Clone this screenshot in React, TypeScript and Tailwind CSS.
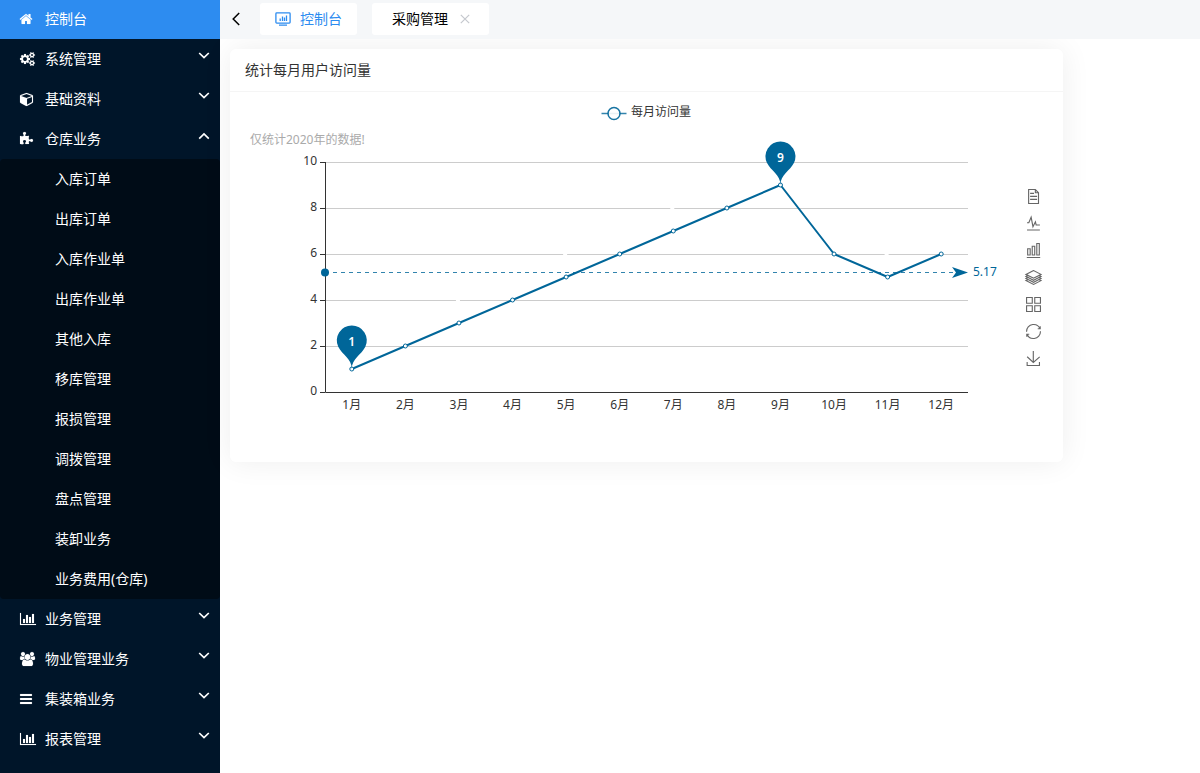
import { useState } from "react";

type IconShape = { viewBox: string; size: string; d: string };

const icons: Record<string, IconShape> = {
  home: {
    viewBox: "64 0 1664 1792",
    size: "w-[13px]",
    d: "M1408 992v480q0 26-19 45t-45 19h-384v-384h-256v384h-384q-26 0-45-19t-19-45v-480q0-1 .5-3t.5-3l575-474 575 474q1 2 1 6zm223-69l-62 74q-8 9-21 11h-3q-13 0-21-7l-692-577-692 577q-12 8-24 7-13-2-21-11l-62-74q-8-10-7-23.5t11-21.5l719-599q32-26 76-26t76 26l244 204v-195q0-14 9-23t23-9h192q14 0 23 9t9 23v408l219 182q10 8 11 21.5t-7 23.5z",
  },
  cogs: {
    viewBox: "0 0 1920 1792",
    size: "w-[15px]",
    d: "M896 896q0-106-75-181t-181-75-181 75-75 181 75 181 181 75 181-75 75-181zm768 512q0-52-38-90t-90-38-90 38-38 90q0 53 37.5 90.5t90.5 37.5 90.5-37.5 37.5-90.5zm0-1024q0-52-38-90t-90-38-90 38-38 90q0 53 37.5 90.5t90.5 37.5 90.5-37.5 37.5-90.5zm-384 421v185q0 10-7 19.5t-16 10.5l-155 24q-11 35-32 76 34 48 90 115 7 11 7 20 0 12-7 19-23 30-82.5 89.5t-78.5 59.5q-11 0-21-7l-115-90q-37 19-77 31-11 108-23 155-7 24-30 24h-186q-11 0-20-7.5t-10-17.5l-23-153q-34-10-75-31l-118 89q-7 7-20 7-11 0-21-8-144-133-144-160 0-9 7-19 10-14 41-53t47-61q-23-44-35-82l-152-24q-10-1-17-9.5t-7-19.5v-185q0-10 7-19.5t16-10.5l155-24q11-35 32-76-34-48-90-115-7-11-7-20 0-12 7-20 22-30 82-89t79-59q11 0 21 7l115 90q34-18 77-32 11-108 23-154 7-24 30-24h186q11 0 20 7.5t10 17.5l23 153q34 10 75 31l118-89q8-7 20-7 11 0 21 8 144 133 144 160 0 8-7 19-12 16-42 54t-45 60q23 48 34 82l152 23q10 2 17 10.5t7 19.5zm640 533v140q0 16-149 31-12 27-30 52 51 113 51 138 0 4-4 7-122 71-124 71-8 0-46-47t-52-68q-20 2-30 2t-30-2q-14 21-52 68t-46 47q-2 0-124-71-4-3-4-7 0-25 51-138-18-25-30-52-149-15-149-31v-140q0-16 149-31 13-29 30-52-51-113-51-138 0-4 4-7 4-2 35-20t59-34 30-16q8 0 46 46.5t52 67.5q20-2 30-2t30 2q51-71 92-112l6-2q4 0 124 70 4 3 4 7 0 25-51 138 17 23 30 52 149 15 149 31zm0-1024v140q0 16-149 31-12 27-30 52 51 113 51 138 0 4-4 7-122 71-124 71-8 0-46-47t-52-68q-20 2-30 2t-30-2q-14 21-52 68t-46 47q-2 0-124-71-4-3-4-7 0-25 51-138-18-25-30-52-149-15-149-31v-140q0-16 149-31 13-29 30-52-51-113-51-138 0-4 4-7 4-2 35-20t59-34 30-16q8 0 46 46.5t52 67.5q20-2 30-2t30 2q51-71 92-112l6-2q4 0 124 70 4 3 4 7 0 25-51 138 17 23 30 52 149 15 149 31z",
  },
  cube: {
    viewBox: "0 0 1664 1792",
    size: "w-[13px]",
    d: "M896 1629l640-349v-636l-640 233v752zm-64-865l698-254-698-254-698 254zm832-252v768q0 35-18 65t-49 47l-704 384q-28 16-61 16t-61-16l-704-384q-31-17-49-47t-18-65v-768q0-40 23-73t61-47l704-256q22-8 44-8t44 8l704 256q38 14 61 47t23 73z",
  },
  puzzle: {
    viewBox: "91 0 1664 1792",
    size: "w-[13px]",
    d: "M1755 1083q0 81-44.5 135t-123.5 54q-41 0-77.5-17.5t-59-38-56.5-38-71-17.5q-110 0-110 124 0 39 16 115t15 115v5q-22 0-33 1-34 3-97.5 11.5t-115.5 13.5-98 5q-61 0-103-26.5t-42-83.5q0-37 17.5-71t38-56.5 38-59 17.5-77.5q0-79-54-123.5t-135-44.5q-84 0-143 45.5t-59 127.5q0 43 15 83t33.5 64.5 33.5 53 15 50.5q0 45-46 89-37 35-117 35-95 0-245-24-9-2-27.5-4t-27.5-4l-13-2q-1 0-3-1-2 0-2-1v-1024q2 1 17.5 3.5t34 5 21.5 3.5q150 24 245 24 80 0 117-35 46-44 46-89 0-22-15-50.5t-33.5-53-33.5-64.5-15-83q0-82 59-127.5t144-45.5q80 0 134 44.5t54 123.5q0 41-17.5 77.5t-38 59-38 56.5-17.5 71q0 57 42 83.5t103 26.5q64 0 180-15t163-17v2q-1 2-3.5 17.5t-5 34-3.5 21.5q-24 150-24 245 0 80 35 117 44 46 89 46 22 0 50.5-15t53-33.5 64.5-33.5 83-15q82 0 127.5 59t45.5 143z",
  },
  chart: {
    viewBox: "0 0 2048 1792",
    size: "w-4",
    d: "M640 896v512h-256v-512h256zm384-512v1024h-256v-1024h256zm1024 1152v128h-2048v-1536h128v1408h1920zm-640-896v768h-256v-768h256zm384-384v1152h-256v-1152h256z",
  },
  users: {
    viewBox: "0 0 1920 1792",
    size: "w-[15px]",
    d: "M593 896q-162 5-265 128h-134q-82 0-138-40.5t-56-118.5q0-353 124-353 6 0 43.5 21t97.5 42.5 119 21.5q67 0 133-23-5 37-5 66 0 159 93 256zm1071 637q0 120-73 189.5t-194 69.5h-874q-121 0-194-69.5t-73-189.5q0-53 3.5-103.5t14-109 26.5-108.5 43-97.5 62-81 85.5-53.5 111.5-20q10 0 43 21.5t73 48 107 48 135 21.5 135-21.5 107-48 73-48 43-21.5q61 0 111.5 20t85.5 53.5 62 81 43 97.5 26.5 108.5 14 109 3.5 103.5zm-1024-1277q0 106-75 181t-181 75-181-75-75-181 75-181 181-75 181 75 75 181zm704 384q0 159-112.5 271.5t-271.5 112.5-271.5-112.5-112.5-271.5 112.5-271.5 271.5-112.5 271.5 112.5 112.5 271.5zm576 225q0 78-56 118.5t-138 40.5h-134q-103-123-265-128 93-97 93-256 0-29-5-66 66 23 133 23 59 0 119-21.5t97.5-42.5 43.5-21q124 0 124 353zm-128-609q0 106-75 181t-181 75-181-75-75-181 75-181 181-75 181 75 75 181z",
  },
  bars: {
    viewBox: "128 0 1536 1792",
    size: "w-3",
    d: "M1664 1344v128q0 26-19 45t-45 19h-1408q-26 0-45-19t-19-45v-128q0-26 19-45t45-19h1408q26 0 45 19t19 45zM1664 832v128q0 26-19 45t-45 19h-1408q-26 0-45-19t-19-45v-128q0-26 19-45t45-19h1408q26 0 45 19t19 45zM1664 320v128q0 26-19 45t-45 19h-1408q-26 0-45-19t-19-45v-128q0-26 19-45t45-19h1408q26 0 45 19t19 45z",
  },
};

type MenuEntry = { icon: string; label: string; children?: string[] };

const menu: MenuEntry[] = [
  { icon: "cogs", label: "系统管理" },
  { icon: "cube", label: "基础资料" },
  {
    icon: "puzzle",
    label: "仓库业务",
    children: [
      "入库订单",
      "出库订单",
      "入库作业单",
      "出库作业单",
      "其他入库",
      "移库管理",
      "报损管理",
      "调拨管理",
      "盘点管理",
      "装卸业务",
      "业务费用(仓库)",
    ],
  },
  { icon: "chart", label: "业务管理" },
  { icon: "users", label: "物业管理业务" },
  { icon: "bars", label: "集装箱业务" },
  { icon: "chart", label: "报表管理" },
];

function MenuIcon({ name }: { name: string }) {
  const icon = icons[name];
  return (
    <span className="flex w-[25px] shrink-0">
      <svg
        viewBox={icon.viewBox}
        className={`h-3.5 overflow-visible fill-current stroke-current stroke-[16] ${icon.size}`}
        aria-hidden="true"
      >
        <path d={icon.d} />
      </svg>
    </span>
  );
}

function Sidebar() {
  const [open, setOpen] = useState("仓库业务");
  return (
    <nav className="w-[220px] shrink-0 bg-[#001529] text-sm text-white">
      <a href="#console" className="flex h-[39px] items-center bg-[#2d8cf0] pb-px pl-5">
        <MenuIcon name="home" />
        控制台
      </a>
      <ul>
        {menu.map((entry) => {
          const expanded = open === entry.label;
          return (
            <li key={entry.label}>
              <button
                type="button"
                aria-expanded={expanded}
                onClick={() => setOpen(expanded ? "" : entry.label)}
                className="flex h-10 w-full cursor-pointer items-center pl-5 pr-[10px] text-left"
              >
                <MenuIcon name={entry.icon} />
                <span className="grow">{entry.label}</span>
                <svg viewBox="0 0 12 12" className="mb-2 h-3 w-3 fill-none stroke-white stroke-[1.7]" aria-hidden="true">
                  <path d={expanded ? "M1.2 9.600L6 5L10.800 9.600" : "M1.2 4L6 8.600L10.800 4"} />
                </svg>
              </button>
              {expanded && entry.children && (
                <ul className="rounded-sm bg-[#000c17]">
                  {entry.children.map((child) => (
                    <li key={child}>
                      <a href="#page" className="flex h-10 items-center pl-[55px]">
                        {child}
                      </a>
                    </li>
                  ))}
                </ul>
              )}
            </li>
          );
        })}
      </ul>
    </nav>
  );
}

function TabBar() {
  return (
    <header className="relative z-10 flex h-[39px] bg-[#f5f7f9] pb-1 pt-[3px] text-sm text-black">
      <button type="button" aria-label="向左滚动" className="flex w-10 cursor-pointer items-center pl-3">
        <svg viewBox="0 0 8 14" className="h-3.5 w-2 fill-none stroke-black stroke-[1.5]" aria-hidden="true">
          <path d="M7.200 1L1.200 7L7.200 13" />
        </svg>
      </button>
      <div className="flex gap-[15px]">
        <button type="button" className="flex cursor-pointer items-center gap-[9px] rounded-[3px] bg-white px-[15px] text-[#2d8cf0]">
          <svg viewBox="0 0 16 14" className="h-3.5 w-4 fill-none stroke-current stroke-[1.300]" aria-hidden="true">
            <rect x="0.900" y="0.900" width="14.200" height="10.200" rx="0.800" />
            <path d="M5.200 9V6.500M7.500 9V4.500M9.500 9V5.500M11.500 9V3.500M4 13.200H12" />
          </svg>
          控制台
        </button>
        <div className="flex items-center gap-3 rounded-[3px] bg-white pl-5 pr-[19px]">
          <button type="button" className="cursor-pointer">
            采购管理
          </button>
          <button type="button" aria-label="关闭采购管理" className="cursor-pointer">
            <svg viewBox="0 0 10 10" className="h-2.5 w-2.5 fill-none stroke-[#c5c8ce] stroke-[1.200]" aria-hidden="true">
              <path d="M0.800 0.800L9.200 9.200M9.200 0.800L0.800 9.200" />
            </svg>
          </button>
        </div>
      </div>
    </header>
  );
}

const visits = [1, 2, 3, 4, 5, 6, 7, 8, 9, 6, 5, 6];
const plot = { left: 80, right: 723, bottom: 290, unit: 23 };
const pointX = (i: number) => plot.left + ((i + 0.5) * (plot.right - plot.left)) / 12;
const pointY = (v: number) => plot.bottom - v * plot.unit;

function Pin({ index }: { index: number }) {
  return (
    <g transform={`translate(${pointX(index)} ${pointY(visits[index])})`}>
      <path
        fill="#006699"
        d="M-13.55 -22.14A15 15 0 1 1 13.55 -22.14C9.69 -14.01 0 -10.5 0 0C0 -10.5 -9.69 -14.01 -13.55 -22.14Z"
      />
      <text y="-23" textAnchor="middle" fill="#fff" className="font-semibold">
        {visits[index]}
      </text>
    </g>
  );
}

function VisitChart() {
  const average = visits.reduce((sum, v) => sum + v, 0) / visits.length;
  const averageY = Math.round(pointY(average)) - 0.5;
  return (
    <svg viewBox="0 0 803 350" className="block h-auto w-full text-xs" role="img" aria-label="每月访问量">
      <path d="M356.500 11.500H381.500" stroke="#006699" strokeWidth="1.500" opacity="0.800" />
      <circle cx="369" cy="11.500" r="6" fill="#fff" stroke="#006699" strokeWidth="1.500" opacity="0.900" />
      <text x="386" y="14" fill="#333">
        每月访问量
      </text>
      <text x="5" y="42" fill="#aaa">
        仅统计2020年的数据!
      </text>

      {[0, 2, 4, 6, 8, 10].map((v) => (
        <g key={v}>
          {v > 0 && <path d={`M${plot.left} ${pointY(v) + 0.5}H${plot.right}`} stroke="#ccc" />}
          <path d={`M75 ${pointY(v) + 0.5}H${plot.left}`} stroke="#333" />
          <text x="72" y={pointY(v) + 3} textAnchor="end" fill="#333">
            {v}
          </text>
        </g>
      ))}
      <path d={`M80.500 60V290.500H${plot.right}`} fill="none" stroke="#333" />
      {visits.map((_, i) => (
        <text key={i} x={pointX(i)} y="307" textAnchor="middle" fill="#333">
          {i + 1}月
        </text>
      ))}

      {[2, 4, 6, 10].map((i) => (
        <path key={i} d={`M${pointX(i) - 3} ${pointY(visits[i] + 1) + 0.5}h4`} stroke="#fff" />
      ))}
      <polyline
        points={visits.map((v, i) => `${pointX(i)},${pointY(v)}`).join(" ")}
        fill="none"
        stroke="#006699"
        strokeWidth="2"
        strokeLinejoin="bevel"
      />
      {visits.map((v, i) => (
        <circle key={i} cx={pointX(i)} cy={pointY(v)} r="2" fill="#fff" stroke="#006699" />
      ))}
      <path d={`M${plot.left} ${averageY}H${plot.right - 8}`} stroke="#006699" strokeDasharray="4 4" opacity="0.800" />
      <circle cx={plot.left} cy={averageY} r="4" fill="#006699" />
      <path d={`M${plot.right} ${averageY}l-16 -5.500l4 5.500l-4 5.500z`} fill="#006699" />
      <text x="728" y="174" fill="#006699">
        {average.toFixed(2)}
      </text>
      <Pin index={8} />
      <Pin index={0} />
    </svg>
  );
}

const tools = [
  { label: "数据视图", viewBox: "1 0 60 60", d: "M17.5,17.3H33M45.4,29.5h-28M11.5,2v56H51V14.8L38.4,2H11.5zM38.4,2.2v12.7H51M45.4,41.7h-28" },
  { label: "切换为折线图", viewBox: "0 2 60 60", d: "M4.100,28.9h7.1l9.3-22l7.4,38l9.7-19.7l3,12.8h14.9M4.1,58h51.4" },
  { label: "切换为柱状图", viewBox: "0 0 60 60", d: "M6.7,22.9h10V48h-10V22.9zM24.9,13h10v35h-10V13zM43.2,2h10v46h-10V2zM3.1,58h53.7" },
  {
    label: "切换为堆叠",
    viewBox: "0 0 60 60",
    d: "M8.2,38.4l-8.4,4.1l30.6,15.3L60,42.5l-8.1-4.1l-21.5,11L8.2,38.4zM51.9,30l-8.1,4.2l-13.4,6.9l-13.9-6.9L8.2,30l-8.4,4.2l8.4,4.2l22.2,11l21.5-11l8.1-4.2L51.9,30zM51.9,21.7l-8.1,4.2L35.7,30l-5.3,2.8L24.9,30l-8.4-4.1l-8.3-4.2l-8.4,4.2L8.2,30l8.3,4.2l13.9,6.9l13.4-6.9l8.1-4.2l8.1-4.1L51.9,21.7zM30.4,2.2L-0.2,17.5l8.4,4.1l8.3,4.2l8.4,4.2l5.5,2.7l5.3-2.7l8.1-4.2l8.1-4.2l8.1-4.1L30.4,2.2z",
  },
  { label: "切换为平铺", viewBox: "0 0 60 60", d: "M2.3,2.2h22.8V25H2.3V2.2zM35,2.2h22.8V25H35V2.2zM2.3,35h22.8v22.8H2.3V35zM35,35h22.8v22.8H35V35z" },
  {
    label: "还原",
    viewBox: "0 0 60 60",
    d: "M47,18.9h9.8V8.7M56.3,20.1C52.1,9,40.5,0.6,26.8,2.1C12.6,3.7,1.6,16.2,2.1,30.6M13,41.1H3.1v10.2M3.7,39.9c4.2,11.1,15.8,19.5,29.5,18c14.2-1.6,25.2-14.1,24.7-28.5",
  },
  { label: "保存为图片", viewBox: "0 0 60 60", d: "M4.7,22.9L29.3,45.5L54.7,23.4M4.6,43.6L4.6,58L53.8,58L53.8,43.6M29.2,45.1L29.2,0" },
];

function Toolbox() {
  return (
    <div className="absolute inset-y-0 right-[7px] flex flex-col items-center justify-center gap-3">
      {tools.map((tool) => (
        <button key={tool.label} type="button" aria-label={tool.label} title={tool.label} className="cursor-pointer">
          <svg viewBox={tool.viewBox} className="block h-[15px] w-[15px] overflow-visible fill-none stroke-[#666] stroke-[4.5]" aria-hidden="true">
            <path d={tool.d} />
          </svg>
        </button>
      ))}
    </div>
  );
}

export default function App() {
  return (
    <div className="flex min-h-screen bg-white font-['Noto_Sans','Noto_Sans_CJK_SC',sans-serif]">
      <Sidebar />
      <div className="min-w-0 grow">
        <TabBar />
        <main className="py-2.5">
          <section className="ml-2.5 w-[85%] rounded-md bg-white shadow-[0_0_30px_rgba(0,0,0,0.07)]">
            <h2 className="flex h-[43px] items-center border-b border-[#f5f5f5] px-[15px] text-sm text-[#333]">
              统计每月用户访问量
            </h2>
            <div className="px-[15px] py-2.5">
              <div className="relative">
                <VisitChart />
                <Toolbox />
              </div>
            </div>
          </section>
        </main>
      </div>
    </div>
  );
}
